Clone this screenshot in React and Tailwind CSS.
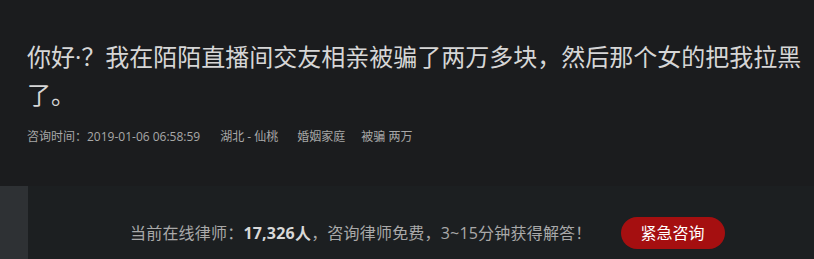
const App = () => {
    return (
        <div className="w-[814px] h-[259px] overflow-hidden bg-[#1b1c1e] font-['Open_Sans','Noto_Sans_CJK_SC',sans-serif]">
            {/* Question */}
            <div className="h-[186px] px-[27px] pt-[38px]">
                <h1 className="text-[24px] leading-[38px] text-[#d6d6d6] font-normal w-[785px]">
                    你好·？我在陌陌直播间交友相亲被骗了两万多块，然后那个女的把我拉黑了。
                </h1>
                <div className="mt-[13px] flex items-center text-[12px] leading-[20px] text-[#a8a8a8]">
                    <span>咨询时间：2019-01-06 06:58:59</span>
                    <span className="ml-[20px]">湖北 - 仙桃</span>
                    <span className="ml-[19px]">婚姻家庭</span>
                    <span className="ml-[16px]">被骗 两万</span>
                </div>
            </div>

            {/* Online lawyers bar */}
            <div className="flex h-[94px]">
                <div className="w-[28px] bg-[#2e3134]" />
                <div className="flex-1 bg-[#1c1f21] flex items-center pl-[102px]">
                    <p className="text-[16px] text-[#a9a9a9] tracking-[0.2px]">
                        当前在线律师：<b className="text-[#d8d8d8] font-bold">17,326人</b>，咨询律师免费，3~15分钟获得解答！
                    </p>
                    <a href="#" className="ml-[29px] w-[104px] h-[32px] rounded-full bg-[#a50f10] text-white text-[16px] flex items-center justify-center">
                        紧急咨询
                    </a>
                </div>
            </div>
        </div>
    );
};

export default App;
